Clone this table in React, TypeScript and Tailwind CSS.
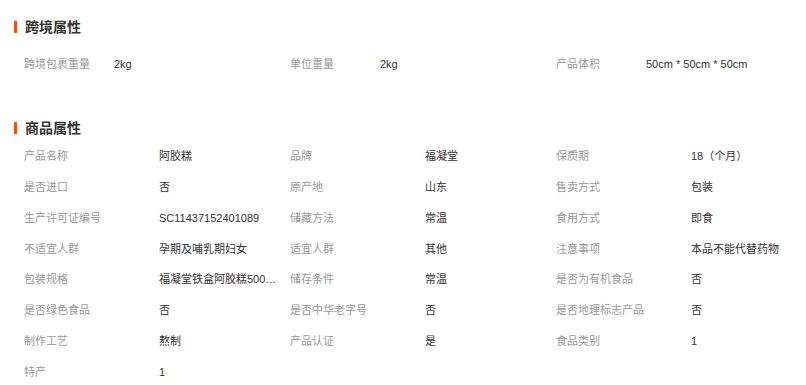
import React from "react";

const font = { fontFamily: '"Liberation Sans", "Noto Sans CJK SC", sans-serif' };

function Title({ text }: { text: string }) {
  return (
    <div className="flex items-center h-[14px] pl-[14px]">
      <div className="w-[3px] h-[12px] bg-[#ff4a00]" />
      <div className="ml-[8px] text-[14px] leading-[14px] font-bold text-[#333]">{text}</div>
    </div>
  );
}

type Cell = [string, string] | null;

function Row({ cells, labelW, h }: { cells: Cell[]; labelW: string; h: string }) {
  return (
    <div className={`grid grid-cols-[266px_266px_266px] pl-[24px] ${h}`}>
      {cells.map((c, i) => (
        <div key={i} className="flex items-center text-[11px]">
          {c && (
            <>
              <div className={`${labelW} shrink-0 text-[#999] whitespace-nowrap`}>{c[0]}</div>
              <div className="w-[120px] truncate text-[#333]">{c[1]}</div>
            </>
          )}
        </div>
      ))}
    </div>
  );
}

const rows: Cell[][] = [
  [["产品名称", "阿胶糕"], ["品牌", "福凝堂"], ["保质期", "18（个月）"]],
  [["是否进口", "否"], ["原产地", "山东"], ["售卖方式", "包装"]],
  [["生产许可证编号", "SC11437152401089"], ["储藏方法", "常温"], ["食用方式", "即食"]],
  [["不适宜人群", "孕期及哺乳期妇女"], ["适宜人群", "其他"], ["注意事项", "本品不能代替药物"]],
  [["包装规格", "福凝堂铁盒阿胶糕500g装"], ["储存条件", "常温"], ["是否为有机食品", "否"]],
  [["是否绿色食品", "否"], ["是否中华老字号", "否"], ["是否地理标志产品", "否"]],
  [["制作工艺", "熬制"], ["产品认证", "是"], ["食品类别", "1"]],
  [["特产", "1"], null, null],
];

export default function App() {
  return (
    <div className="w-[806px] h-[385px] bg-white overflow-hidden pt-[20px]" style={font}>
      <Title text="跨境属性" />
      <div className="mt-[15px]">
        <Row
          labelW="w-[90px]"
          h="h-[31px]"
          cells={[
            ["跨境包裹重量", "2kg"],
            ["单位重量", "2kg"],
            ["产品体积", "50cm * 50cm * 50cm"],
          ]}
        />
      </div>
      <div className="mt-[41px]">
        <Title text="商品属性" />
      </div>
      <div className="mt-[6px]">
        {rows.map((r, i) => (
          <Row key={i} labelW="w-[135px]" h="h-[30.8px]" cells={r} />
        ))}
      </div>
    </div>
  );
}
